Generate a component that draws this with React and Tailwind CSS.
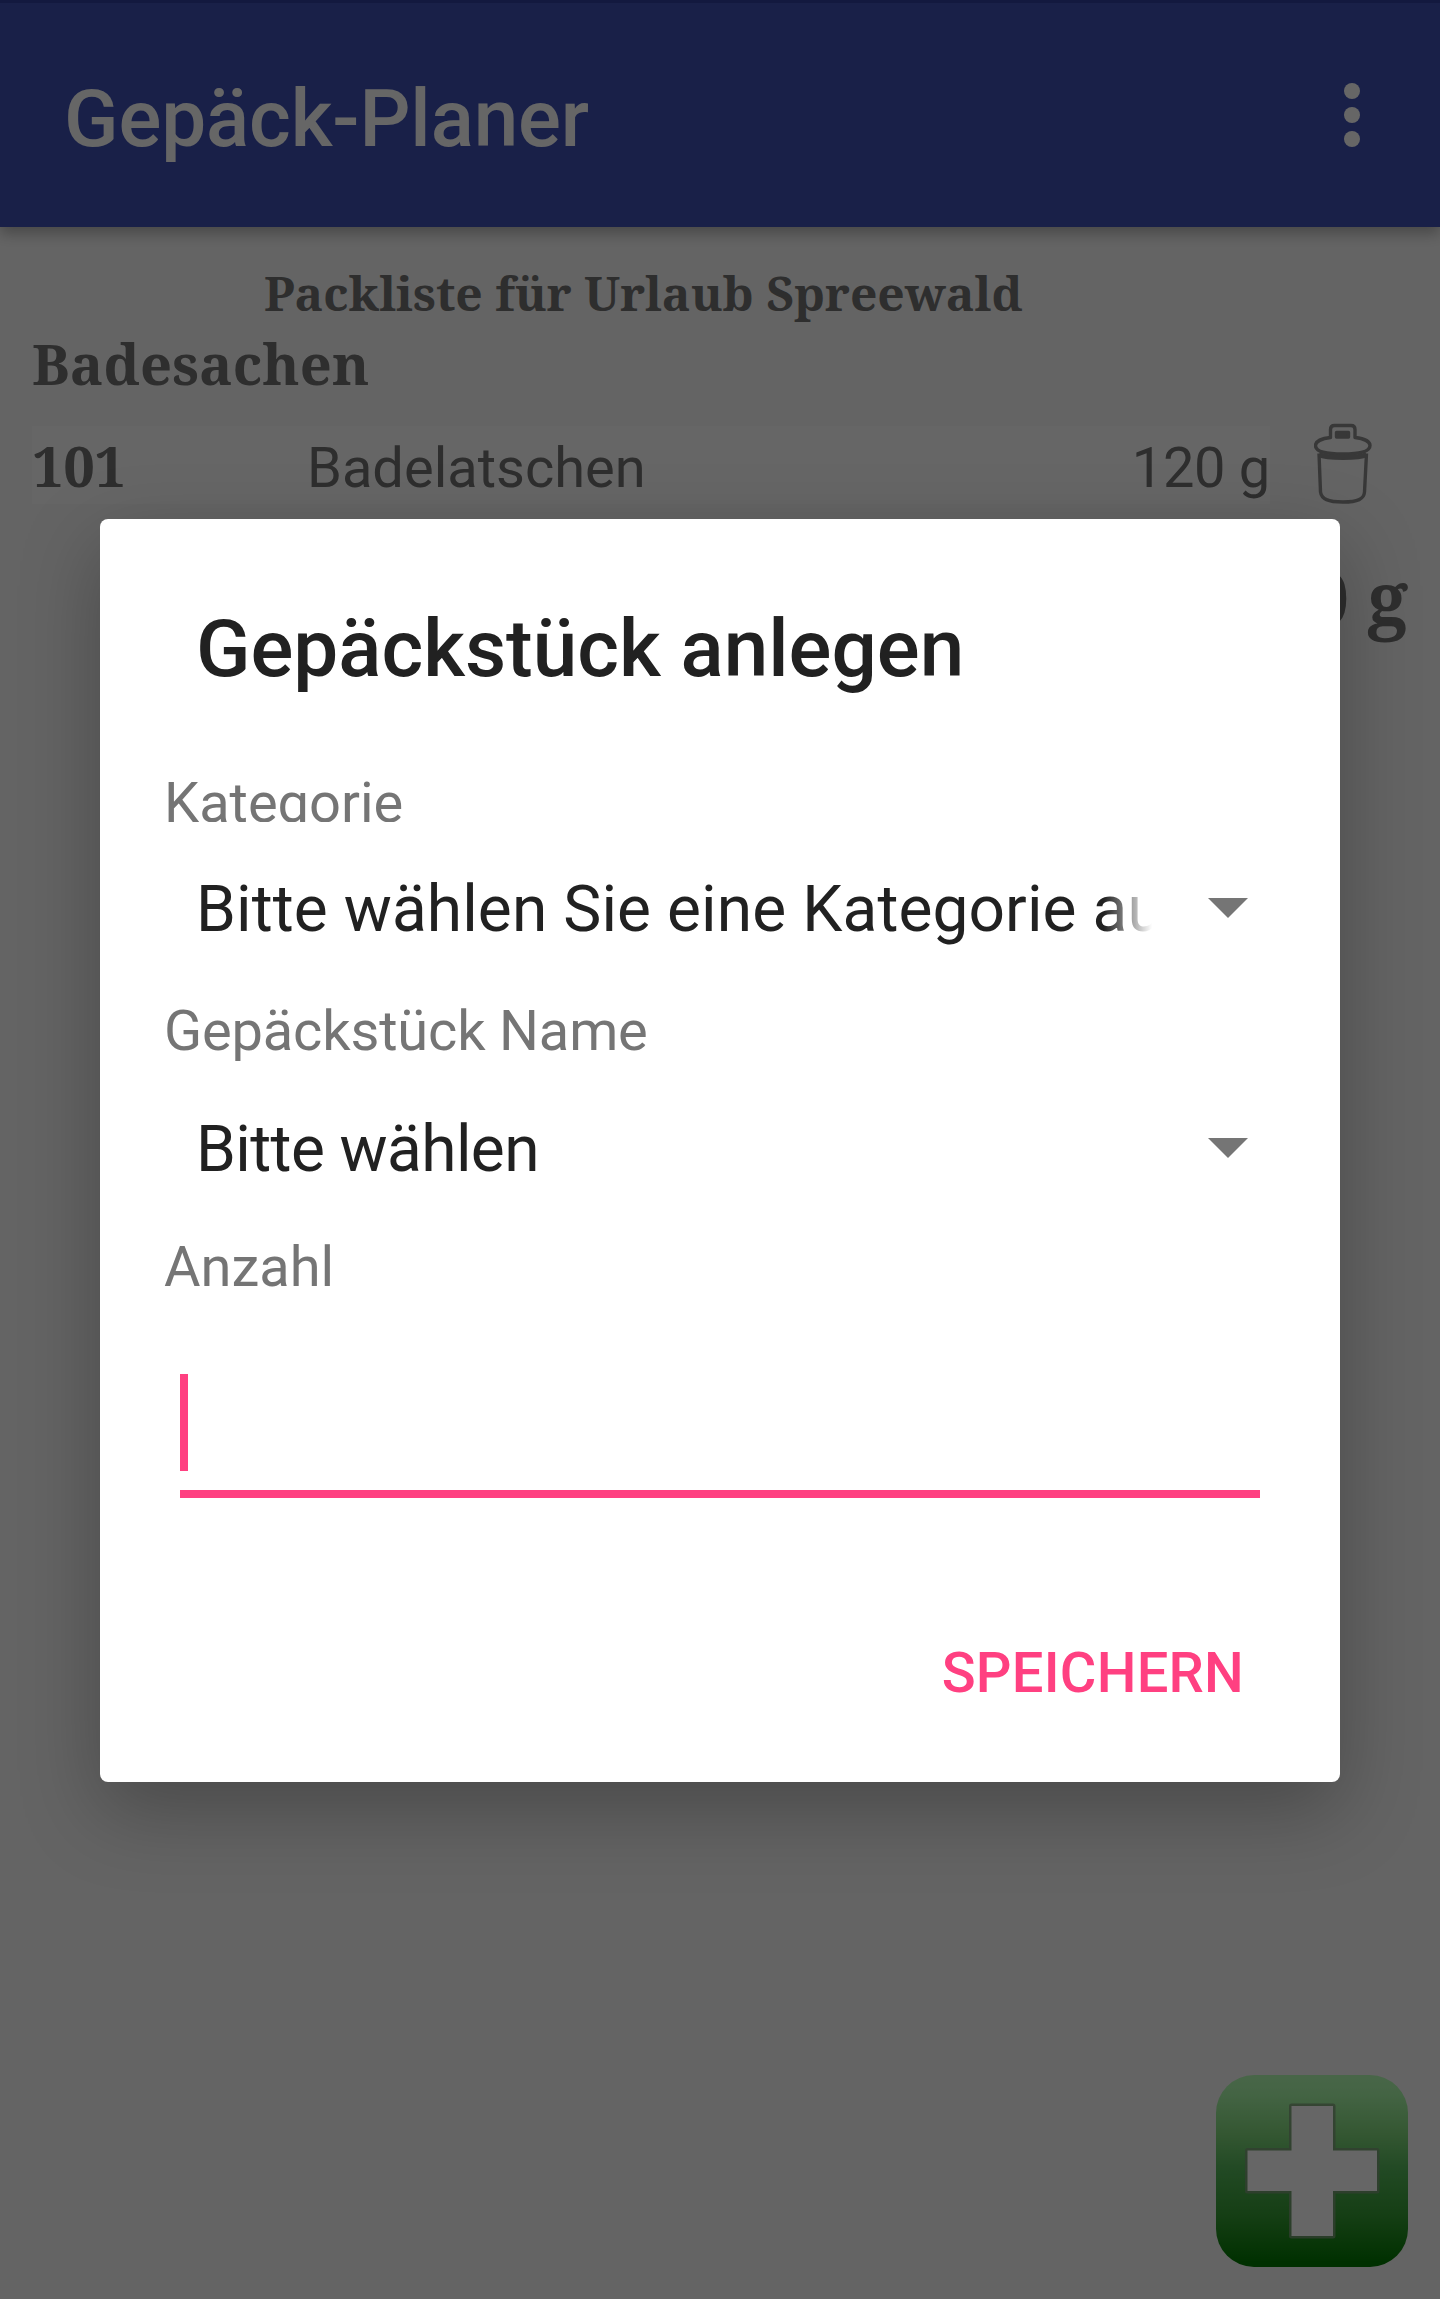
const ROBOTO = "font-['Roboto',sans-serif]";
const SERIF = "font-['Noto_Serif','Droid_Serif','DejaVu_Serif',serif]";

function AppBar() {
  return (
    <header className="relative h-[227px] border-t-[3px] border-[#303f9f] bg-[#3f51b5] shadow-[0_6px_14px_rgba(0,0,0,0.3)]">
      <div className="flex items-start justify-between pl-16 pr-20 pt-[68px]">
        <h1 className="text-[80px] font-medium leading-[96px] tracking-[-0.1px] text-white">Gepäck-Planer</h1>
        <button aria-label="Mehr" className="mt-3 flex flex-col gap-2">
          <span className="size-4 rounded-full bg-white" />
          <span className="size-4 rounded-full bg-white" />
          <span className="size-4 rounded-full bg-white" />
        </button>
      </div>
    </header>
  );
}

function TrashIcon() {
  return (
    <svg viewBox="0 0 60 82" className="h-[82px] w-[60px]" fill="none" stroke="#8c8c8c" strokeWidth="3.4" strokeLinejoin="round">
      <path d="M16.500 14.500V6.500Q16.500 2.500 20.500 2.500H37Q41 2.500 41 6.500V14.500C50 15.500 56 18.500 56 22.500C56 29 45 31 29 31C13 31 1.500 29 1.500 22.500C1.500 18.500 7.500 15.500 16.500 14.500Z" />
      <path d="M5 30.500L6.500 69C7.500 76 14 79 29 79C44 79 50 76 50.500 69L52.500 30.500" />
      <path d="M5 31.500C13 35.500 45 35.500 52.500 31.500" strokeWidth="5" />
      <path d="M22.500 9.500H34.500V14H22.500Z" fill="#8c8c8c" />
    </svg>
  );
}

function PackingList() {
  return (
    <main className="pl-8 pr-8 text-[#737373]">
      <h2 className={`${SERIF} ml-[232px] mt-[34px] whitespace-nowrap text-[48px] font-bold leading-[64px] tracking-[-0.04px]`}>
        Packliste für Urlaub Spreewald
      </h2>
      <h3 className={`${SERIF} whitespace-nowrap text-[56px] font-bold leading-[76px] tracking-[0.1px]`}>Badesachen</h3>
      <div className="mt-[21px] flex items-start">
        <div className="mt-1 flex h-[78px] w-[1238px] items-center bg-white">
          <span className={`${SERIF} w-[275px] text-[56px] font-bold leading-[76px] tracking-[-0.5px]`}>101</span>
          <span className="flex-1 pt-[5px] text-[56px] leading-[76px]">Badelatschen</span>
          <span className="pt-[5px] text-[56px] leading-[76px] tracking-[-0.3px]">120 g</span>
        </div>
        <div className="ml-11 mt-px">
          <TrashIcon />
        </div>
      </div>
      <p className={`${SERIF} mt-[43px] text-right text-[72px] font-bold leading-[98px]`}>120 g</p>
    </main>
  );
}

function AddButton() {
  return (
    <button
      aria-label="Hinzufügen"
      className="absolute bottom-8 right-8 size-[192px] overflow-hidden rounded-[38px] bg-[linear-gradient(180deg,#b5ffb5_0%,#aafaaa_10%,#82d97d_31%,#57b95c_48%,#349b32_74%,#007800_98%)]"
    >
      <svg viewBox="0 0 192 192" className="size-full">
        <path
          d="M75.500 31H117V75.500H161V116H117V161H75.500V116H31.500V75.500H75.500Z"
          fill="white"
          stroke="#7d9c79"
          strokeOpacity="0.8"
          strokeWidth="5"
          strokeLinejoin="round"
          className="[paint-order:stroke]"
        />
      </svg>
    </button>
  );
}

function Spinner({ text, textClass }) {
  return (
    <div className="flex h-20 items-start justify-between pl-8 pr-3">
      <span
        className={`mt-px w-[956px] overflow-hidden whitespace-nowrap text-[64px] leading-[80px] text-[#212121] [mask-image:linear-gradient(90deg,#000_908px,transparent_956px)] ${textClass}`}
      >
        {text}
      </span>
      <svg viewBox="0 0 40 20" className="mt-[29px] h-5 w-10">
        <path d="M0 0H40L20 20Z" fill="#757575" />
      </svg>
    </div>
  );
}

function Dialog() {
  return (
    <section className="absolute left-[100px] top-[519px] flex h-[1263px] w-[1240px] flex-col rounded-[8px] bg-white pl-16 pr-20 shadow-[0_28px_80px_rgba(0,0,0,0.27)]">
      <h2 className="ml-8 mt-[82px] whitespace-nowrap text-[80px] font-medium leading-[96px] text-[#212121]">Gepäckstück anlegen</h2>
      <label className="mt-[72px] h-[53px] overflow-hidden text-[56px] leading-[68px] text-[#757575]">Kategorie</label>
      <div className="mt-[47px]">
        <Spinner text="Bitte wählen Sie eine Kategorie aus" textClass="tracking-[0.1px]" />
      </div>
      <label className="mt-[48px] text-[56px] leading-[68px] tracking-[-0.17px] text-[#757575]">Gepäckstück Name</label>
      <div className="mt-[44px]">
        <Spinner text="Bitte wählen" textClass="tracking-[-0.6px]" />
      </div>
      <label className="mt-[44px] text-[56px] leading-[68px] text-[#757575]">Anzahl</label>
      <div className="ml-4 mt-[73px] h-[124px] w-[1080px] border-b-8 border-[#ff4081]">
        <div className="h-[97px] w-2 bg-[#ff4081]" />
      </div>
      <button className="mt-[141px] self-end pr-4 text-[56px] font-medium leading-[68px] tracking-[0.25px] text-[#ff4081]">SPEICHERN</button>
    </section>
  );
}

export default function App() {
  return (
    <div className={`${ROBOTO} relative h-[2299px] w-[1440px] overflow-hidden bg-[#fafafa]`}>
      <AppBar />
      <PackingList />
      <AddButton />
      <div className="absolute inset-0 bg-black/60" />
      <Dialog />
    </div>
  );
}
